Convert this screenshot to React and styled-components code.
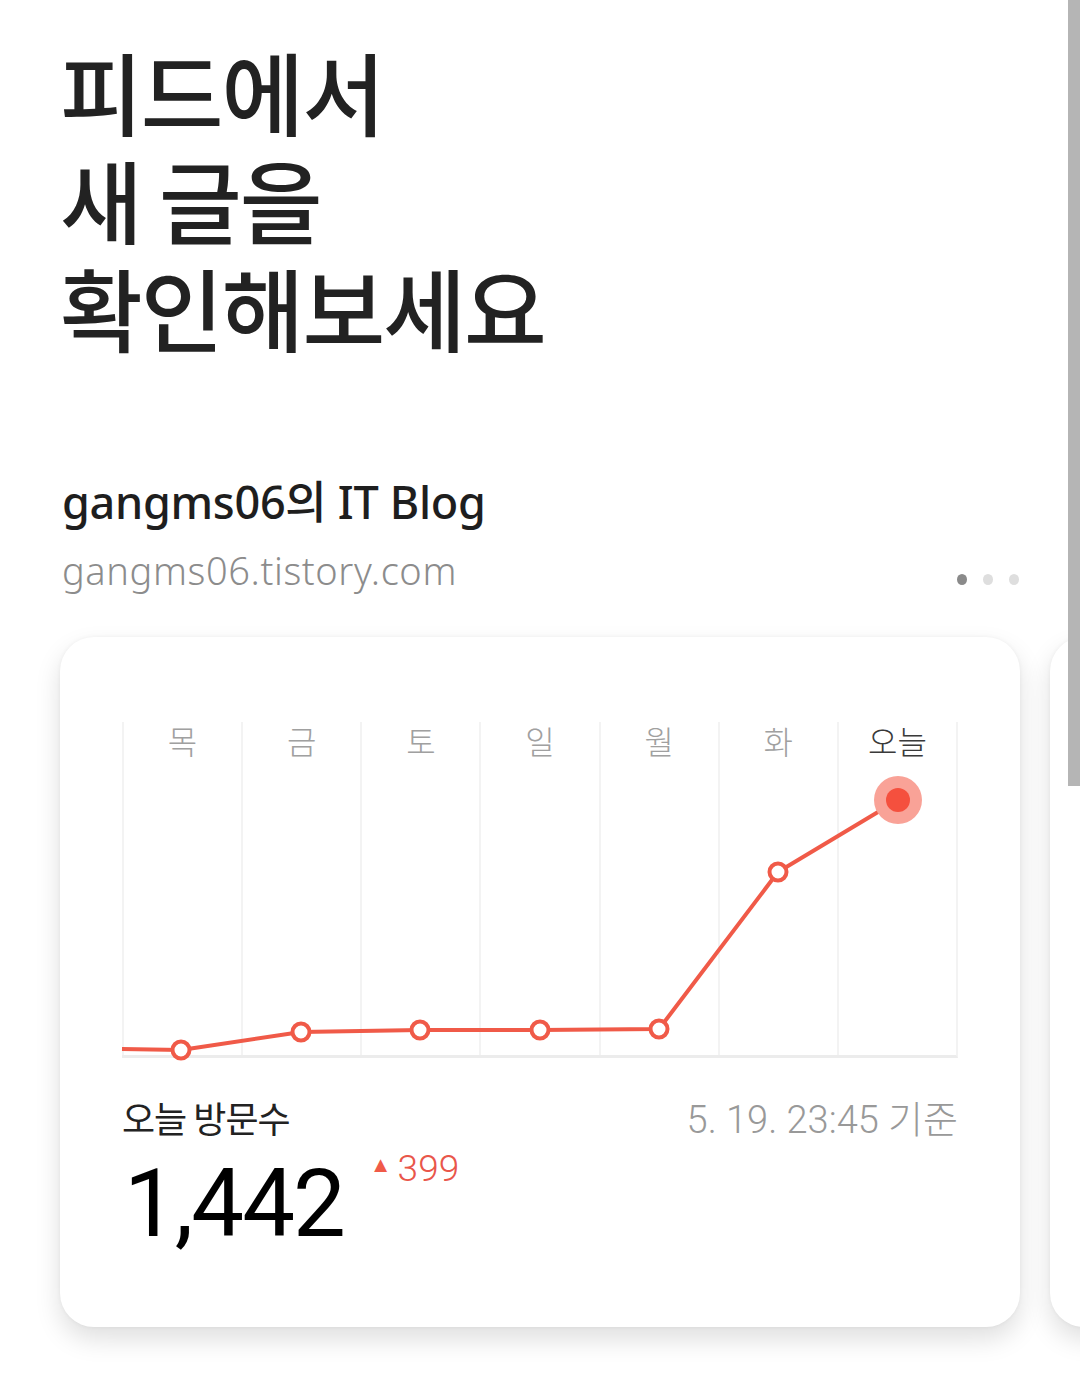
import React from 'react';
import styled, { createGlobalStyle } from 'styled-components';

const GlobalStyle = createGlobalStyle`
  html, body {
    margin: 0;
    padding: 0;
    background: #ffffff;
  }
  body {
    font-family: "Noto Sans", "Noto Sans CJK KR", sans-serif;
    overflow: hidden;
  }
`;

const days = ['목', '금', '토', '일', '월', '화', '오늘'];

// chart points in px inside the plot (836 x 336)
const points = [
  [59, 328],
  [179, 310],
  [298, 308],
  [418, 308],
  [537, 307],
  [656, 150],
];
const today = [776, 78];

const App = () => {
  const path = [[0, 327], ...points, today].map((p) => p.join(',')).join(' ');

  return (
    <Page>
      <GlobalStyle />
      <Heading>
        피드에서
        <br />
        새 글을
        <br />
        확인해보세요
      </Heading>

      <BlogHeader>
        <BlogTitle>gangms06의 IT Blog</BlogTitle>
        <UrlRow>
          <BlogUrl>gangms06.tistory.com</BlogUrl>
          <Dots>
            <Dot active />
            <Dot />
            <Dot />
          </Dots>
        </UrlRow>
      </BlogHeader>

      <Carousel>
        <Card>
          <Chart>
            <Columns>
              {days.map((d, i) => (
                <Column key={d}>
                  <DayLabel today={i === days.length - 1}>{d}</DayLabel>
                </Column>
              ))}
            </Columns>
            <Plot viewBox="0 0 836 336" width="836" height="336">
              <polyline
                points={path}
                fill="none"
                stroke="#f05a48"
                strokeWidth="4"
                strokeLinejoin="round"
              />
              {points.map(([x, y]) => (
                <circle key={x} cx={x} cy={y} r="8.5" fill="#fff" stroke="#f05a48" strokeWidth="4" />
              ))}
              <circle cx={today[0]} cy={today[1]} r="24" fill="#f9a297" />
              <circle cx={today[0]} cy={today[1]} r="12" fill="#f5503e" />
            </Plot>
          </Chart>

          <StatsRow>
            <StatLabel>오늘 방문수</StatLabel>
            <StatTime>5. 19. 23:45 기준</StatTime>
          </StatsRow>
          <CountRow>
            <Count>1,442</Count>
            <Delta>
              <Triangle>▲</Triangle>399
            </Delta>
          </CountRow>
        </Card>
        <Card />
      </Carousel>

      <Scrollbar />
    </Page>
  );
};

const Page = styled.div`
  width: 1080px;
  height: 1389px;
  overflow: hidden;
  position: relative;
  background: #fff;
`;

const Heading = styled.h1`
  margin: 0;
  padding: 36px 0 0 60px;
  font-family: "Noto Sans CJK KR", sans-serif;
  font-weight: 500;
  font-size: 90px;
  line-height: 108px;
  letter-spacing: -2px;
  color: #222;
`;

const BlogHeader = styled.div`
  padding: 112px 60px 0 62px;
`;

const BlogTitle = styled.div`
  font-family: "Noto Sans", "Noto Sans CJK KR", sans-serif;
  font-weight: 500;
  font-size: 45px;
  line-height: 60px;
  color: #1e1e1e;
  letter-spacing: -0.3px;
`;

const UrlRow = styled.div`
  display: flex;
  align-items: center;
  justify-content: space-between;
  margin-top: 14px;
`;

const BlogUrl = styled.div`
  font-family: "Noto Sans", sans-serif;
  font-weight: 300;
  font-size: 38px;
  line-height: 48px;
  letter-spacing: 0.6px;
  color: #8c8c8c;
`;

const Dots = styled.div`
  display: flex;
  gap: 16px;
  padding-right: 1px;
  margin-top: 18px;
`;

const Dot = styled.span`
  width: 10px;
  height: 11px;
  border-radius: 50%;
  background: ${(p) => (p.active ? '#8a8a8a' : '#dedede')};
`;

const Carousel = styled.div`
  display: flex;
  gap: 30px;
  padding: 43px 0 0 60px;
`;

const Card = styled.div`
  flex: 0 0 960px;
  height: 690px;
  box-sizing: border-box;
  padding: 85px 62px 0 62px;
  background: #fff;
  border-radius: 34px;
  box-shadow: 0 12px 26px rgba(0, 0, 0, 0.13), 0 0 4px rgba(0, 0, 0, 0.05);
`;

const Chart = styled.div`
  position: relative;
  width: 836px;
  height: 336px;
`;

const Columns = styled.div`
  display: grid;
  grid-template-columns: repeat(7, 1fr);
  height: 100%;
  border-right: 2px solid #f3f3f3;
  border-bottom: 3px solid #ececec;
  box-sizing: border-box;
`;

const Column = styled.div`
  border-left: 2px solid #f3f3f3;
  display: flex;
  justify-content: center;
`;

const DayLabel = styled.span`
  font-family: "Noto Sans CJK KR", sans-serif;
  font-weight: 300;
  font-size: 32px;
  line-height: 36px;
  margin-top: 0;
  color: ${(p) => (p.today ? '#3a3a3a' : '#a0a0a0')};
`;

const Plot = styled.svg`
  position: absolute;
  left: 0;
  top: 0;
  overflow: visible;
`;

const StatsRow = styled.div`
  display: flex;
  justify-content: space-between;
  align-items: baseline;
  margin-top: 36px;
`;

const StatLabel = styled.span`
  font-family: "Noto Sans CJK KR", sans-serif;
  font-size: 36px;
  line-height: 46px;
  letter-spacing: -1px;
  color: #222;
`;

const StatTime = styled.span`
  font-family: Roboto, "Noto Sans CJK KR", sans-serif;
  font-weight: 300;
  font-size: 38px;
  line-height: 46px;
  color: #999;
`;

const CountRow = styled.div`
  display: flex;
  align-items: flex-start;
  gap: 26px;
  margin-top: 6px;
`;

const Count = styled.span`
  font-family: Roboto, sans-serif;
  font-weight: 400;
  font-size: 94px;
  line-height: 110px;
  letter-spacing: -2px;
  color: #000;
  margin-left: 2px;
`;

const Delta = styled.span`
  display: flex;
  align-items: center;
  font-family: Roboto, sans-serif;
  font-weight: 300;
  font-size: 37px;
  line-height: 40px;
  color: #e9564a;
  margin-top: 0;
`;

const Triangle = styled.span`
  font-size: 22px;
  margin-right: 6px;
  margin-top: -8px;
  color: #f05a48;
`;

const Scrollbar = styled.div`
  position: absolute;
  top: 0;
  right: 0;
  width: 12px;
  height: 786px;
  background: #b5b5b5;
`;

export default App;
